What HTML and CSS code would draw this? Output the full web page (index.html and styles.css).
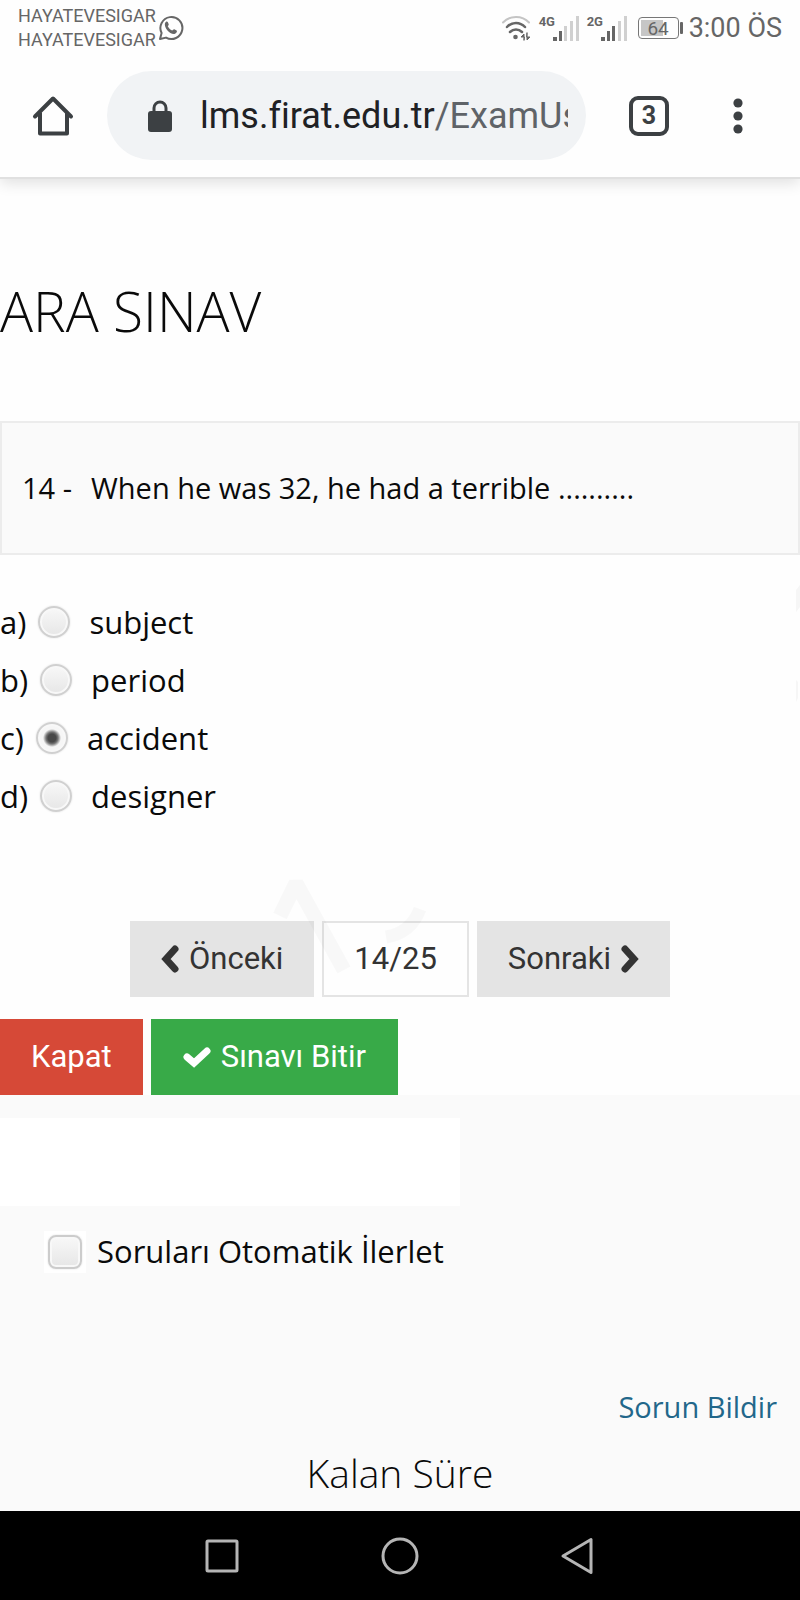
FILE: index.html
```html
<!DOCTYPE html>
<html lang="tr">
<head>
<meta charset="utf-8">
<meta name="viewport" content="width=device-width, initial-scale=1">
<title>ARA SINAV</title>
<link rel="stylesheet" href="styles.css">
</head>
<body>
<div class="status">
  <div class="carriers"><span>HAYATEVESIGAR</span><span>HAYATEVESIGAR</span></div>
  <svg class="whatsapp" width="26" height="26" viewBox="0 0 26 26" fill="none">
    <path d="M2 24l1.600-6A11 11 0 1 1 8 22.600z" stroke="#666" stroke-width="2" stroke-linejoin="round"/>
    <path d="M7 8c1-2 2.300-2 2.900-.7l.8 2c.3.800-.9 1.600-.9 2 .9 2 2.300 3.300 4.300 4.200.7 0 1.500-1.500 2.200-1.200l2.300 1.200c1 .6-.1 3-2.100 3.500C12 19.700 5.600 12.500 7 8z" fill="#666"/>
  </svg>
  <div class="indicators">
    <svg width="30" height="26" viewBox="0 0 30 26" fill="none" stroke-width="2" stroke-linecap="round">
      <path d="M2 7.500C9 0 21 0 28 7.500" stroke="#c4c4c4"/>
      <path d="M6 12c5-5.500 13-5.500 18 0M9 17c3.500-3.500 8.500-3.500 12 0" stroke="#666" stroke-width="2.500"/>
      <circle cx="14.500" cy="22" r="2.300" fill="#666"/>
      <path d="M23 25v-6l-3 3h3zM26 18v7l3-3h-3z" fill="#666" stroke="#666" stroke-width="1"/>
    </svg>
    <div class="signal">
      <span class="network">4G</span>
      <svg width="26" height="25" viewBox="0 0 26 25">
        <path d="M0 21h4v4H0zM6 15h3v10H6z" fill="#666"/>
        <path d="M11 10h3v15h-3zM17 5h3v20h-3zM23 0h3v25h-3z" fill="#d0d0d0"/>
      </svg>
    </div>
    <div class="signal">
      <span class="network">2G</span>
      <svg width="26" height="25" viewBox="0 0 26 25">
        <path d="M0 21h4v4H0zM6 15h3v10H6zM11 10h3v15h-3z" fill="#666"/>
        <path d="M17 5h3v20h-3zM23 0h3v25h-3z" fill="#d0d0d0"/>
      </svg>
    </div>
    <div class="battery"><span class="charge">64</span></div>
    <span class="clock">3:00 ÖS</span>
  </div>
</div>

<header class="toolbar">
  <button class="icon-button" type="button" aria-label="Ana sayfa">
    <svg width="42" height="42" viewBox="0 0 42 42" fill="none" stroke="#3c4043" stroke-width="4" stroke-linecap="round" stroke-linejoin="round">
      <path d="M3 21.500L21 3.500l18 18M8 18v20.500h27V18"/>
    </svg>
  </button>
  <button class="address" type="button">
    <svg class="lock" width="24" height="32" viewBox="0 0 24 32">
      <path d="M6 13V8a6 6 0 0 1 12 0v5" fill="none" stroke="#3c4043" stroke-width="3"/>
      <rect y="11" width="24" height="21" rx="3" fill="#3c4043"/>
    </svg>
    <span class="url">lms.firat.edu.tr<span class="path">/ExamUs</span></span>
  </button>
  <button class="tabs" type="button" aria-label="Sekmeler">3</button>
  <button class="icon-button menu" type="button" aria-label="Menü">
    <svg width="10" height="36" viewBox="0 0 10 36" fill="#3c4043"><circle cx="5" cy="5" r="4.600"/><circle cx="5" cy="18" r="4.600"/><circle cx="5" cy="31" r="4.600"/></svg>
  </button>
</header>

<main class="exam">
  <h1 class="title">ARA SINAV</h1>
  <div class="question"><span>14 -</span><span>When he was 32, he had a terrible ..........</span></div>
  <div class="answers">
    <div class="answer"><label for="a">a)</label><input class="radio" type="radio" name="answer" id="a"><label class="text" for="a">subject</label></div>
    <div class="answer"><label for="b">b)</label><input class="radio" type="radio" name="answer" id="b"><label class="text" for="b">period</label></div>
    <div class="answer"><label for="c">c)</label><input class="radio" type="radio" name="answer" id="c" checked><label class="text" for="c">accident</label></div>
    <div class="answer"><label for="d">d)</label><input class="radio" type="radio" name="answer" id="d"><label class="text" for="d">designer</label></div>
    <svg class="edge-mark" width="8" height="120" viewBox="0 0 8 120" fill="#f6f6f6"><path d="M8 0L4 5v22l4-5zM4 95l2 2v16l-2 4z"/></svg>
  </div>
  <nav class="pager">
    <button class="button" type="button">
      <svg width="18" height="28" viewBox="0 0 18 28" fill="none" stroke="#333" stroke-width="7" stroke-linecap="round"><path d="M14 4L5 14l9 10"/></svg>
      Önceki
    </button>
    <button class="button count" type="button">14/25</button>
    <button class="button" type="button">
      Sonraki
      <svg width="18" height="28" viewBox="0 0 18 28" fill="none" stroke="#333" stroke-width="7" stroke-linecap="round"><path d="M4 4l9 10-9 10"/></svg>
    </button>
    <svg class="watermark" width="154" height="100" viewBox="0 0 154 100" fill="none" stroke="#000" stroke-opacity=".025">
      <path d="M8 40L24 7L72 94" stroke-width="15" stroke-linejoin="bevel"/>
      <path d="M114 61q25-4 34-28" stroke-width="13"/>
    </svg>
  </nav>
  <div class="actions">
    <button class="button close" type="button">Kapat</button>
    <button class="button finish" type="button">
      <svg width="28" height="22" viewBox="0 0 28 22" fill="none" stroke="#fff" stroke-width="7" stroke-linecap="round" stroke-linejoin="miter"><path d="M4 11l7 6L24 5"/></svg>
      Sınavı Bitir
    </button>
  </div>
</main>

<section class="panel">
  <div class="blank"></div>
  <div class="auto">
    <span class="check-frame"><input class="check" type="checkbox" id="auto"></span>
    <label for="auto">Soruları Otomatik İlerlet</label>
  </div>
  <a class="report" href="#">Sorun Bildir</a>
  <h2 class="remaining">Kalan Süre</h2>
</section>

<nav class="system">
  <button class="icon-button" type="button" aria-label="Son uygulamalar"><svg width="38" height="38" viewBox="0 0 38 38" fill="none" stroke="#b5b5b5" stroke-width="3"><rect x="4" y="4" width="30" height="30" rx="1"/></svg></button>
  <button class="icon-button" type="button" aria-label="Ana ekran"><svg width="38" height="38" viewBox="0 0 38 38" fill="none" stroke="#b5b5b5" stroke-width="3"><circle cx="19" cy="19" r="17"/></svg></button>
  <button class="icon-button" type="button" aria-label="Geri"><svg width="38" height="38" viewBox="0 0 38 38" fill="none" stroke="#b5b5b5" stroke-width="3" stroke-linejoin="round"><path d="M32 2.500v33L4 19z"/></svg></button>
</nav>
</body>
</html>
```
FILE: styles.css
```css
* { box-sizing: border-box; }

body {
  margin: 0;
  min-height: 100vh;
  display: flex;
  flex-direction: column;
  background: #fefefe;
  color: #0a0a0a;
  font-family: "Open Sans", sans-serif;
  font-size: 31px;
  line-height: 40px;
  overflow-x: hidden;
}

button {
  border: 0;
  padding: 0;
  margin: 0;
  background: none;
  font-family: Roboto, sans-serif;
}

svg { display: block; flex: none; }

/* Phone status bar */
.status {
  display: flex;
  align-items: center;
  height: 56px;
  padding: 0 18px;
  color: #666;
  font-family: Roboto, sans-serif;
}

.carriers {
  display: flex;
  flex-direction: column;
  font-size: 18px;
  line-height: 24px;
}

.whatsapp { margin-left: 2px; }

.indicators {
  display: flex;
  align-items: center;
  gap: 8px;
  margin-left: auto;
}

.signal { display: flex; align-items: flex-start; }

.network {
  width: 14px;
  font-size: 13px;
  line-height: 12px;
  font-weight: 700;
}

.battery {
  position: relative;
  width: 41px;
  height: 22px;
  margin: 0 2px 0 3px;
  padding: 2px;
  border: 1px solid #777;
  border-radius: 4px;
}

.battery::after {
  content: "";
  position: absolute;
  right: -5px;
  top: 4px;
  width: 3px;
  height: 12px;
  border-radius: 1px;
  background: #666;
}

.charge {
  display: block;
  height: 16px;
  background: linear-gradient(90deg, #c6c6c6 64%, transparent 64%);
  font-size: 19px;
  line-height: 17px;
  text-align: center;
}

.clock { font-size: 27px; white-space: nowrap; }

/* Browser toolbar */
.toolbar {
  display: flex;
  align-items: center;
  height: 123px;
  padding: 0 57px 2px 32px;
  border-bottom: 2px solid #e0e0e0;
  box-shadow: 0 4px 14px #0000001f;
  clip-path: inset(0 0 -24px 0);
}

.address {
  display: flex;
  flex: 1;
  align-items: center;
  gap: 28px;
  min-width: 0;
  height: 89px;
  margin: 0 43px 0 33px;
  padding: 0 18px 0 41px;
  border-radius: 45px;
  background: #f1f3f5;
}

.url {
  flex: 1;
  overflow: hidden;
  color: #202124;
  font-size: 36px;
  line-height: 48px;
  text-align: left;
  white-space: nowrap;
}

.path { color: #5f6368; }

.tabs {
  width: 40px;
  height: 40px;
  border: 4px solid #3c4043;
  border-radius: 9px;
  color: #3c4043;
  font-size: 25px;
  font-weight: 700;
  line-height: 32px;
}

.menu { margin-left: 64px; }

/* Exam */
.title {
  margin: 94px 0 72px;
  font-size: 55px;
  font-weight: 300;
  line-height: 76px;
}

.question {
  display: flex;
  gap: 19px;
  padding: 45px 20px;
  border: 2px solid #ececec;
  background: #fafafa;
  font-size: 29px;
}

.answers {
  position: relative;
  padding: 38px 0 96px;
}

.answer {
  display: flex;
  align-items: center;
  height: 58px;
}

.radio,
.check {
  appearance: none;
  margin: 0;
  background: linear-gradient(#f8f8f8, #e6e6e6);
  box-shadow: inset 0 0 0 2px #f8f8f8, 0 0 2px #ddd;
}

.radio {
  width: 32px;
  height: 32px;
  margin: 0 19px 0 12px;
  border: 2px solid #d0d0d0;
  border-radius: 50%;
}

.radio:checked {
  background: radial-gradient(circle, #484848 4px, #777 6px, #f6f6f6 9px);
}

.edge-mark { position: absolute; right: 0; top: 30px; }

.pager {
  position: relative;
  display: flex;
  justify-content: center;
  gap: 8px;
}

.button {
  display: flex;
  align-items: center;
  justify-content: center;
  gap: 10px;
  height: 76px;
  padding: 0 31px;
  background: #e4e4e4;
  color: #333;
  font-size: 31px;
  line-height: 40px;
}

.count {
  padding: 0 30px;
  border: 2px solid #e4e4e4;
  background: #fefefe;
}

.watermark {
  position: absolute;
  left: 34%;
  top: -45px;
  pointer-events: none;
}

.actions { display: flex; gap: 8px; padding-top: 22px; }
.close { background: #d64937; color: #fff; }
.finish { padding: 0 32px; background: #38aa48; color: #fff; }

/* Lower panel */
.panel {
  display: flex;
  flex: 1;
  flex-direction: column;
  padding-top: 23px;
  background: #fafafa;
}

.blank {
  width: 460px;
  max-width: 100%;
  height: 88px;
  background: #fff;
}

.auto {
  display: flex;
  align-items: flex-start;
  gap: 11px;
  padding: 25px 0 0 44px;
}

.check-frame { padding: 4px; background: #fff; }

.check {
  display: block;
  width: 34px;
  height: 34px;
  border: 2px solid #ccc;
  border-radius: 8px;
}

.report {
  align-self: flex-end;
  margin: 114px 23px 0 0;
  color: #22678a;
  font-size: 29px;
  text-decoration: none;
}

.remaining {
  margin: 19px 0 0;
  font-size: 39px;
  font-weight: 300;
  line-height: 54px;
  text-align: center;
}

.system {
  display: flex;
  align-items: center;
  justify-content: center;
  gap: 140px;
  height: 89px;
  background: #000;
}
```
